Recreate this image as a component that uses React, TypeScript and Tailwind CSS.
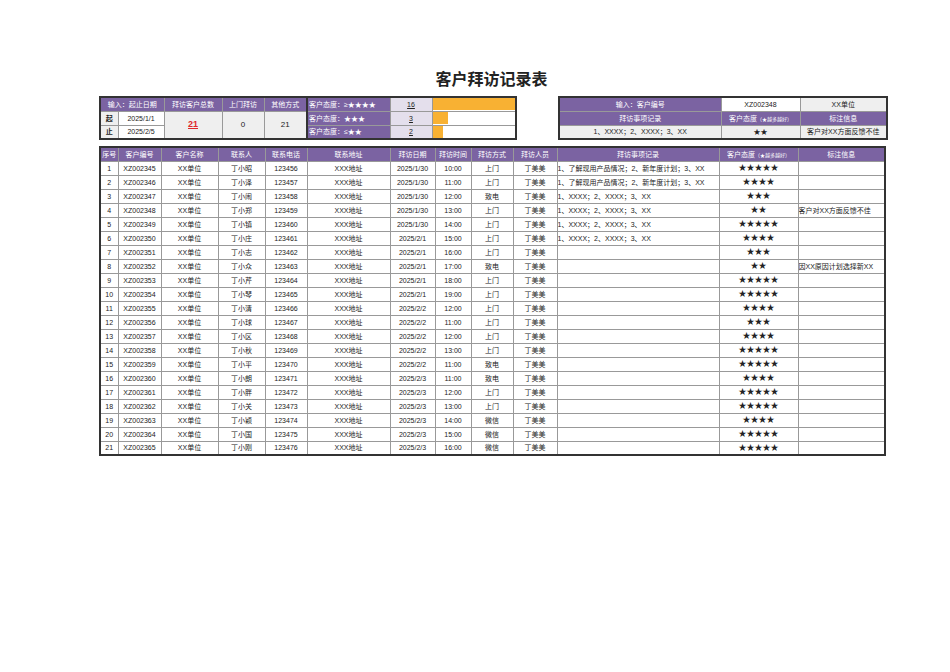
import React from "react";

const P = "bg-[#7b63a2] text-white";
const names = "昭泽闹郑镇庄志众芹琴清球区秋平朗胖关颖国刚".split("");
const dates = ["2025/1/30","2025/1/30","2025/1/30","2025/1/30","2025/1/30","2025/2/1","2025/2/1","2025/2/1","2025/2/1","2025/2/1","2025/2/2","2025/2/2","2025/2/2","2025/2/2","2025/2/2","2025/2/3","2025/2/3","2025/2/3","2025/2/3","2025/2/3","2025/2/3"];
const times = ["10:00","11:00","12:00","13:00","14:00","15:00","16:00","17:00","18:00","19:00","12:00","11:00","12:00","13:00","11:00","11:00","12:00","13:00","14:00","15:00","16:00"];
const ways = ["上门","上门","致电","上门","上门","上门","上门","致电","上门","上门","上门","上门","上门","上门","致电","致电","上门","上门","微信","微信","微信"];
const recs = ["1、了解现用产品情况；2、新年度计划；3、XX","1、了解现用产品情况；2、新年度计划；3、XX","1、XXXX；2、XXXX；3、XX","1、XXXX；2、XXXX；3、XX","1、XXXX；2、XXXX；3、XX","1、XXXX；2、XXXX；3、XX"];
const stars = [5,4,3,2,5,4,3,2,5,5,4,3,4,5,5,4,5,5,4,5,5];
const notes: Record<number,string> = {3:"客户对XX方面反馈不佳",7:"因XX原因计划选择新XX"};
const widths = [18,43,57,47,42,83,45,36,42,44,162,79,87];

export default function App() {
  const td = "border border-[#999] h-[14px] p-0 text-center whitespace-nowrap overflow-hidden";
  return (
    <div className="w-[950px] h-[672px] bg-white text-[#222] text-[7px] leading-none" style={{fontFamily:'"Liberation Sans","Noto Sans CJK SC",sans-serif'}}>
      <div className="pt-[71px] pl-[99px]">
        <div className="w-[785px] text-center text-[16px] font-bold h-[18px] leading-[18px]">客户拜访记录表</div>
        <div className="flex mt-[7px] items-start">
          <table className="border-collapse table-fixed border-2 border-[#333]" style={{width:416}}>
            <colgroup>{[18,46,58,42,43,83,42,84].map((w,i)=><col key={i} style={{width:w}}/>)}</colgroup>
            <tbody>
              <tr>
                <td colSpan={2} className={`${td} ${P}`}>输入：起止日期</td>
                <td className={`${td} ${P}`}>拜访客户总数</td>
                <td className={`${td} ${P}`}>上门拜访</td>
                <td className={`${td} ${P} border-r-2 border-r-[#333]`}>其他方式</td>
                <td className={`${td} ${P} text-left pl-[1px]`}>客户态度：≥★★★★</td>
                <td className={`${td} bg-[#e4dfec] underline`}>16</td>
                <td className={`${td} p-0`}><div className="h-[12px] bg-[#f8b133]" style={{width:"100%"}}/></td>
              </tr>
              <tr>
                <td className={`${td} bg-[#efefef] font-bold`}>起</td>
                <td className={`${td} bg-white`}>2025/1/1</td>
                <td rowSpan={2} className={`${td} bg-[#efefef] text-[#e0262b] text-[9px] font-bold underline`}>21</td>
                <td rowSpan={2} className={`${td} bg-[#efefef] text-[8px]`}>0</td>
                <td rowSpan={2} className={`${td} bg-[#efefef] text-[8px] border-r-2 border-r-[#333]`}>21</td>
                <td className={`${td} ${P} text-left pl-[1px]`}>客户态度：★★★</td>
                <td className={`${td} bg-[#e4dfec] underline`}>3</td>
                <td className={`${td}`}><div className="h-[12px] bg-[#f8b133] w-[15px]"/></td>
              </tr>
              <tr>
                <td className={`${td} bg-[#efefef] font-bold`}>止</td>
                <td className={`${td} bg-white`}>2025/2/5</td>
                <td className={`${td} ${P} text-left pl-[1px]`}>客户态度：≤★★</td>
                <td className={`${td} bg-[#e4dfec] underline`}>2</td>
                <td className={`${td}`}><div className="h-[12px] bg-[#f8b133] w-[10px]"/></td>
              </tr>
            </tbody>
          </table>
          <table className="border-collapse table-fixed border-2 border-[#333] ml-[41px]" style={{width:328}}>
            <colgroup>{[162,79,87].map((w,i)=><col key={i} style={{width:w}}/>)}</colgroup>
            <tbody>
              <tr>
                <td className={`${td} ${P}`}>输入：客户编号</td>
                <td className={`${td} bg-white`}>XZ002348</td>
                <td className={`${td} bg-[#efefef]`}>XX单位</td>
              </tr>
              <tr>
                <td className={`${td} ${P}`}>拜访事项记录</td>
                <td className={`${td} ${P}`}>客户态度<span className="text-[5px]">（★越多越好）</span></td>
                <td className={`${td} ${P}`}>标注信息</td>
              </tr>
              <tr>
                <td className={`${td} bg-[#efefef]`}>1、XXXX；2、XXXX；3、XX</td>
                <td className={`${td} bg-[#efefef]`}>★★</td>
                <td className={`${td} bg-[#efefef]`}>客户对XX方面反馈不佳</td>
              </tr>
            </tbody>
          </table>
        </div>
        <table className="border-collapse table-fixed border-2 border-[#333] mt-[6px]" style={{width:787}}>
          <colgroup>{widths.map((w,i)=><col key={i} style={{width:w}}/>)}</colgroup>
          <thead>
            <tr>
              {["序号","客户编号","客户名称","联系人","联系电话","联系地址","拜访日期","拜访时间","拜访方式","拜访人员","拜访事项记录"].map(h=>
                <th key={h} className={`${td} ${P} font-normal`}>{h}</th>)}
              <th className={`${td} ${P} font-normal`}>客户态度<span className="text-[5px]">（★越多越好）</span></th>
              <th className={`${td} ${P} font-normal`}>标注信息</th>
            </tr>
          </thead>
          <tbody>
            {names.map((n,i)=>(
              <tr key={i}>
                <td className={td}>{i+1}</td>
                <td className={td}>{`XZ00${2345+i}`}</td>
                <td className={td}>XX单位</td>
                <td className={td}>丁小{n}</td>
                <td className={td}>{123456+i}</td>
                <td className={td}>XXX地址</td>
                <td className={td}>{dates[i]}</td>
                <td className={td}>{times[i]}</td>
                <td className={td}>{ways[i]}</td>
                <td className={td}>丁美美</td>
                <td className={`${td} text-left`}>{recs[i]??""}</td>
                <td className={`${td} text-[8px]`}>{"★".repeat(stars[i])}</td>
                <td className={`${td} text-left`}>{notes[i]??""}</td>
              </tr>
            ))}
          </tbody>
        </table>
      </div>
    </div>
  );
}
